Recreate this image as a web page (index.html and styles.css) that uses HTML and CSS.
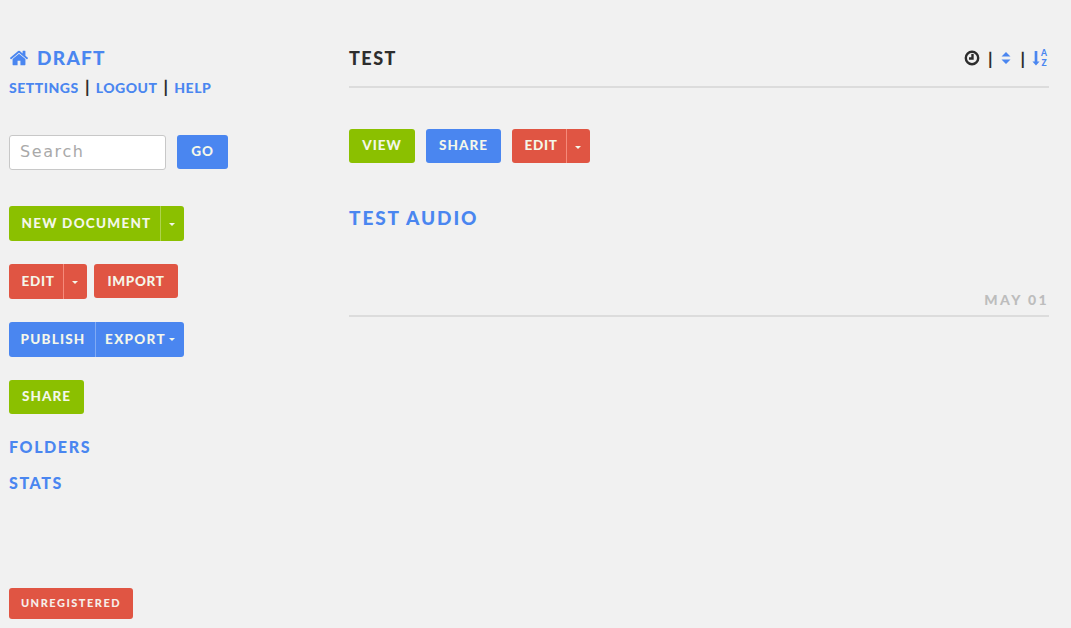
FILE: index.html
```html
<!DOCTYPE html>
<html lang="en">
<head>
<meta charset="utf-8">
<title>Draft</title>
<link rel="stylesheet" href="styles.css">
</head>
<body>
<aside class="sidebar">
  <h1 class="brand"><svg class="home" viewBox="0 0 1792 1792"><path d="M1472 992v480q0 26-19 45t-45 19h-384v-384h-256v384h-384q-26 0-45-19t-19-45v-480q0-1 .5-3t.5-3l575-474 575 474q1 2 1 6zm223-69l-62 74q-8 9-21 11h-3q-13 0-21-7l-692-577-692 577q-12 8-24 7-13-2-21-11l-62-74q-8-10-7-23.500t11-21.500l719-599q32-26 76-26t76 26l244 204v-195q0-14 9-23t23-9h192q14 0 23 9t9 23v408l219 182q10 8 11 21.500t-7 23.500z"/></svg>DRAFT</h1>
  <p class="links"><a>SETTINGS</a> <span class="sep">|</span> <a>LOGOUT</a> <span class="sep">|</span> <a>HELP</a></p>
  <form class="search">
    <input class="search-input" type="text" placeholder="Search">
    <button class="btn blue go" type="button">GO</button>
  </form>
  <div class="row r-new">
    <div class="btn-group green"><span class="seg seg-new">NEW DOCUMENT</span><span class="seg caret-seg seg-newc"><i class="caret"></i></span></div>
  </div>
  <div class="row">
    <div class="btn-group red"><span class="seg seg-edit">EDIT</span><span class="seg caret-seg seg-editc"><i class="caret"></i></span></div>
    <button class="btn red import" type="button">IMPORT</button>
  </div>
  <div class="row">
    <div class="btn-group blue"><span class="seg seg-pub">PUBLISH</span><span class="seg seg-exp">EXPORT<i class="caret caret-exp"></i></span></div>
  </div>
  <div class="row">
    <button class="btn green share-side" type="button">SHARE</button>
  </div>
  <h3 class="nav nav-folders">FOLDERS</h3>
  <h3 class="nav nav-stats">STATS</h3>
  <span class="unreg">UNREGISTERED</span>
</aside>
<main class="main">
  <header class="head">
    <h2 class="title">TEST</h2>
    <div class="tools">
      <svg class="clock" viewBox="0 0 16 16"><circle cx="8" cy="8" r="6.2"/><path d="M8.500 4v4.500H5"/></svg>
      <span class="sep">|</span>
      <svg class="sort" viewBox="0 0 10 14"><path d="M5 1l4.500 4.500h-9zM5 13L.5 8.500h9z"/></svg>
      <span class="sep">|</span>
      <div class="alpha">
        <svg class="alpha-arrow" viewBox="0 0 9 18"><path d="M3 1h3v12h2.500L4.500 17.500.5 13H3z"/></svg>
        <div class="az"><span>A</span><span>Z</span></div>
      </div>
    </div>
  </header>
  <div class="actions">
    <button class="btn green view" type="button">VIEW</button>
    <button class="btn blue share-main" type="button">SHARE</button>
    <div class="btn-group red group-main"><span class="seg seg-edit2">EDIT</span><span class="seg caret-seg seg-editc2"><i class="caret"></i></span></div>
  </div>
  <article class="doc">
    <h2 class="doc-title">TEST AUDIO</h2>
    <div class="doc-date">MAY 01</div>
  </article>
</main>
</body>
</html>
```
FILE: styles.css
```css
* { box-sizing: border-box; }
html, body { margin: 0; height: 100%; }
body {
  display: flex;
  height: 628px;
  overflow: hidden;
  background: #f1f1f1;
  font-family: "Lato", "Liberation Sans", sans-serif;
  font-weight: 900;
  color: #4a86f0;
}
.sidebar {
  position: relative;
  width: 349px;
  padding-left: 9px;
  flex: none;
}
.brand {
  display: flex;
  align-items: center;
  margin: 47px 0 0;
  height: 21px;
  font-size: 19px;
  font-weight: 900;
  letter-spacing: 1.3px;
  line-height: 21px;
}
.home { width: 20px; height: 20px; fill: #4a86f0; margin-right: 8px; }
.links {
  margin: 10px 0 0;
  height: 18px;
  font-size: 14px;
  line-height: 18px;
  letter-spacing: 0.5px;
  white-space: nowrap;
}
.sep { color: #2d2d2d; font-size: 17px; font-weight: 900; letter-spacing: 0; }
.links .sep { margin: 0 2.500px; }
.search { display: flex; margin-top: 39px; }
.search-input {
  width: 157px;
  height: 35px;
  padding: 0 10px 3px;
  border: 1px solid #c8c8c8;
  border-radius: 3px;
  background: #fff;
  font-family: "DejaVu Sans", sans-serif;
  font-size: 16px;
  letter-spacing: 1.6px;
  outline: none;
}
.search-input::placeholder { color: #a9a9a9; opacity: 1; }
.btn, .seg {
  font-family: inherit;
  font-weight: 900;
  font-size: 13.5px;
  letter-spacing: 1px;
  color: #f4f7ea;
}
.btn {
  display: block;
  height: 34px;
  padding: 0 0 2px;
  border: 0;
  border-radius: 3px;
  text-align: center;
}
.green { background: #8bc000; }
.red { background: #e05543; }
.blue { background: #4a86f0; }
.go { width: 51px; margin-left: 11px; }
.row { display: flex; gap: 7px; height: 35px; margin-top: 23px; }
.r-new { margin-top: 36px; }
.btn-group { display: flex; height: 35px; border-radius: 3px; overflow: hidden; }
.seg { display: flex; align-items: center; justify-content: center; height: 100%; padding-bottom: 2px; }
.caret-seg, .seg-exp { border-left: 1px solid rgba(255,255,255,.3); }
.red .caret-seg { border-left-color: #f58a7a; }
.caret-seg { padding: 0 2px 0 0; }
.seg-new { width: 151px; padding-left: 4px; letter-spacing: 1.25px; }
.seg-newc { width: 24px; }
.seg-edit { width: 54px; padding-left: 4px; letter-spacing: .7px; }
.seg-editc { width: 24px; }
.seg-pub { width: 86px; padding-left: 2px; letter-spacing: 1.2px; }
.seg-exp { width: 89px; letter-spacing: 1.3px; }
.caret {
  display: block;
  width: 0;
  height: 0;
  margin-top: 2px;
  border: 3px solid transparent;
  border-top-color: #f4f7ea;
  border-bottom: 0;
}
.caret-exp { margin-left: 3px; }
.import { width: 84px; padding-bottom: 0; letter-spacing: .7px; }
.share-side { width: 75px; height: 34px; }
.nav {
  margin: 0;
  height: 20px;
  font-size: 16px;
  font-weight: 900;
  line-height: 20px;
  letter-spacing: 1.6px;
}
.nav-folders { margin-top: 22px; }
.nav-stats { margin-top: 16px; }
.unreg {
  position: absolute;
  left: 9px;
  top: 588px;
  width: 124px;
  height: 31px;
  border-radius: 3px;
  background: #e05543;
  color: #f6eeea;
  font-size: 11px;
  line-height: 30px;
  letter-spacing: 1.5px;
  text-align: center;
}
.main { width: 700px; flex: none; }
.head {
  display: flex;
  justify-content: space-between;
  align-items: center;
  height: 42px;
  margin-top: 46px;
  border-bottom: 2px solid #dcdcdc;
  padding-bottom: 16px;
  padding-right: 1px;
}
.title {
  margin: 0;
  color: #2d2d2d;
  font-size: 18px;
  font-weight: 900;
  letter-spacing: 1.5px;
}
.tools { display: flex; align-items: center; gap: 8px; font-size: 16px; }
.clock { width: 16px; height: 16px; fill: none; stroke: #2d2d2d; stroke-width: 2.4; }
.sort { width: 10px; height: 14px; fill: #4a86f0; margin: 0 1px; }
.alpha { display: flex; width: 16px; height: 18px; margin-left: -1px; }
.alpha-arrow { width: 8px; height: 18px; flex: none; fill: #4a86f0; }
.az { display: flex; flex-direction: column; width: 8px; margin-top: -1px; font-size: 8.500px; line-height: 10.300px; text-align: center; }
.actions { display: flex; margin-top: 41px; height: 34px; }
.view { width: 66px; }
.share-main { width: 75px; margin-left: 11px; }
.group-main { height: 34px; margin-left: 11px; }
.seg-edit2 { width: 54px; padding-left: 4px; letter-spacing: .7px; }
.seg-editc2 { width: 24px; }
.doc { border-bottom: 2px solid #dcdcdc; height: 154px; }
.doc-title {
  margin: 0;
  padding-top: 43px;
  font-size: 19px;
  line-height: 24px;
  font-weight: 900;
  letter-spacing: 1.9px;
}
.doc-date {
  margin-top: 61px;
  padding-right: 0;
  text-align: right;
  color: #bdbdbd;
  font-size: 14px;
  line-height: 18px;
  letter-spacing: 2.4px;
}
```
